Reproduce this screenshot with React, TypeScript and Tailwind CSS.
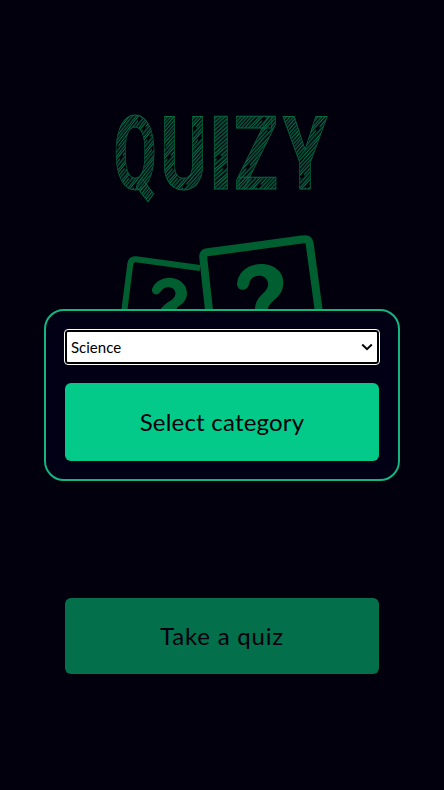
import React from "react";

const letters = [
  { char: "Q", x: 116, width: 39 },
  { char: "U", x: 164, width: 38.5 },
  { char: "I", x: 214, width: 13 },
  { char: "Z", x: 236.5, width: 39.5 },
  { char: "Y", x: 283, width: 45 },
];

const glyphInk: Record<string, [number, number]> = {
  Q: [0.038, 0.66],
  U: [0.052, 0.598],
  I: [0.07, 0.216],
  Z: [0.038, 0.578],
  Y: [0.002, 0.627],
};

function Title() {
  return (
    <svg className="block h-[150px] w-[444px] shrink-0" viewBox="0 80 444 150" role="img" aria-label="Quizy">
      <defs>
        <pattern id="hatch" width="12" height="46" patternUnits="userSpaceOnUse" patternTransform="rotate(52)">
          <path
            d="M1 0 L1.5 23 L1 46 M4 0 L3.7 23 L4 46 M7 0 L7.3 14 M6.8 20 L7 46 M10.2 0 L9.8 30 L10.2 46"
            fill="none"
            stroke="#05784a"
            strokeWidth="1.3"
          />
        </pattern>
      </defs>
      {letters.map(({ char, x, width }) => {
        const [left, right] = glyphInk[char];
        const sx = width / (100 * (right - left));
        return (
          <text
            key={char}
            transform={`translate(${x - left * 100 * sx} 189) scale(${sx} 1.015)`}
            fill="url(#hatch)"
            stroke="#056a40"
            strokeWidth="0.9"
            fontSize="100"
            className="font-['Roboto',sans-serif] font-bold"
          >
            {char}
          </text>
        );
      })}
    </svg>
  );
}

function Cards() {
  return (
    <svg className="block h-[100px] w-[220px] shrink-0" viewBox="0 0 660 300" fill="none" aria-hidden="true">
      <path d="M43 256 L61 116 Q64 101 78 103 L270 129" stroke="#005f30" strokeWidth="18" />
      <path
        d="M126 192 C134 170 155 158 180 158 C210 160 232 180 231 206 C230 226 216 238 202 246 L198 256 L150 256 C158 243 168 235 180 228 C190 222 198 214 196 202 C194 190 180 184 166 188 C158 191 155 196 150 202 C142 214 124 208 126 192Z"
        fill="#005f30"
      />
      <path
        d="M297 256 L280 100 Q278 84 292 82 L580 43 Q597 40 599 56 L626 256"
        fill="#01000c"
        stroke="#005f30"
        strokeWidth="24"
      />
      <path
        d="M381 178 C383 140 415 117 453 117 C490 117 520 138 520 172 C520 198 508 212 492 226 C480 237 474 244 472 256 L435 256 C435 235 441 222 458 206 C467 198 476 188 474 174 C472 160 462 152 448 152 C430 152 420 162 417 178 C412 200 383 200 381 178Z"
        fill="#005f30"
      />
    </svg>
  );
}

export default function App() {
  return (
    <div className="relative flex h-[790px] w-[444px] flex-col items-center overflow-hidden bg-[#01000c] pt-[80px] font-['Lato',sans-serif] text-[#01000c]">
      <Title />
      <div className="-mt-[5px] mr-[4px]">
        <Cards />
      </div>
      <button className="mt-[273px] flex h-[76px] w-[314px] shrink-0 items-center justify-center rounded-md bg-[#03704b] text-[24px]">
        <span className="tracking-[0.8px]">Take a quiz</span>
      </button>

      <div
        role="dialog"
        className="absolute top-[309px] left-[44px] flex h-[172px] w-[356px] flex-col rounded-[20px] border-2 border-[#13b580] bg-[#020015] px-[18px] pt-[18px]"
      >
        <div className="flex h-[36px] w-[316px] shrink-0 rounded-[4px] border border-white bg-black p-[2px]">
          <div className="flex flex-1 items-center justify-between rounded-[1px] bg-white px-[4px] text-[15px] text-black">
            <span>Science</span>
            <svg className="h-[8px] w-[12px]" viewBox="0 0 12 8" fill="none" aria-hidden="true">
              <path d="M1.2 1.5 L6 6.2 L10.8 1.5" stroke="#050505" strokeWidth="2" />
            </svg>
          </div>
        </div>
        <button className="mt-[18px] ml-px flex h-[78px] w-[314px] shrink-0 items-center justify-center rounded-md bg-[#03ca89] text-[24px]">
          <span className="tracking-[0.2px]">Select category</span>
        </button>
      </div>
    </div>
  );
}
